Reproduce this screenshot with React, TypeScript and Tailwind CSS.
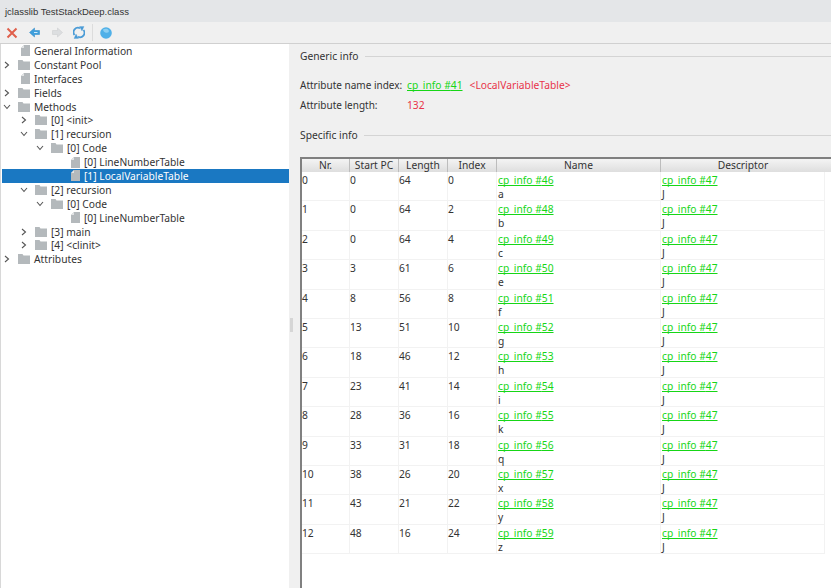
const font = "font-['Noto_Sans',sans-serif]";

type Node = { label: string; depth: number; arrow?: "right" | "down"; kind: "file" | "folder"; selected?: boolean };

const tree: Node[] = [
  { label: "General Information", depth: 0, kind: "file" },
  { label: "Constant Pool", depth: 0, arrow: "right", kind: "folder" },
  { label: "Interfaces", depth: 0, kind: "file" },
  { label: "Fields", depth: 0, arrow: "right", kind: "folder" },
  { label: "Methods", depth: 0, arrow: "down", kind: "folder" },
  { label: "[0] <init>", depth: 1, arrow: "right", kind: "folder" },
  { label: "[1] recursion", depth: 1, arrow: "down", kind: "folder" },
  { label: "[0] Code", depth: 2, arrow: "down", kind: "folder" },
  { label: "[0] LineNumberTable", depth: 3, kind: "file" },
  { label: "[1] LocalVariableTable", depth: 3, kind: "file", selected: true },
  { label: "[2] recursion", depth: 1, arrow: "down", kind: "folder" },
  { label: "[0] Code", depth: 2, arrow: "down", kind: "folder" },
  { label: "[0] LineNumberTable", depth: 3, kind: "file" },
  { label: "[3] main", depth: 1, arrow: "right", kind: "folder" },
  { label: "[4] <clinit>", depth: 1, arrow: "right", kind: "folder" },
  { label: "Attributes", depth: 0, arrow: "right", kind: "folder" },
];

const rows = [
  [0, 0, 64, 0, 46, "a"],
  [1, 0, 64, 2, 48, "b"],
  [2, 0, 64, 4, 49, "c"],
  [3, 3, 61, 6, 50, "e"],
  [4, 8, 56, 8, 51, "f"],
  [5, 13, 51, 10, 52, "g"],
  [6, 18, 46, 12, 53, "h"],
  [7, 23, 41, 14, 54, "i"],
  [8, 28, 36, 16, 55, "k"],
  [9, 33, 31, 18, 56, "q"],
  [10, 38, 26, 20, 57, "x"],
  [11, 43, 21, 22, 58, "y"],
  [12, 48, 16, 24, 59, "z"],
];

const columns = "grid w-[523px] grid-cols-[48px_49px_49px_49px_164px_164px]";

function FolderIcon() {
  return (
    <svg width="12" height="10" viewBox="0 0 12 10" className="shrink-0">
      <path d="M0 0h4.5l1 1.5H12V10H0z" fill="#b4b9bc" />
    </svg>
  );
}

function FileIcon() {
  return (
    <svg width="9" height="11" viewBox="0 0 9 11" className="shrink-0">
      <path d="M3 0h6v11H0V3z" fill="#b4b9bc" />
      <path d="M0 3h3V0z" fill="#e2e4e5" />
    </svg>
  );
}

function Chevron({ dir }: { dir: "right" | "down" }) {
  return (
    <svg width="8" height="8" viewBox="0 0 8 8" className="shrink-0" fill="none" stroke="#555" strokeWidth="1.1">
      {dir === "right" ? <path d="M2 1l3.5 3L2 7" /> : <path d="M1 2l3 3.5L7 2" />}
    </svg>
  );
}

function TreeRow({ node }: { node: Node }) {
  return (
    <div className={`flex h-[13.9px] items-center ${node.selected ? "bg-[#1a78c2] text-white" : "text-[#333]"}`}>
      <div
        className={`flex items-center ${
          node.depth === 0 ? "pl-[1px]" : node.depth === 1 ? "pl-[18px]" : node.depth === 2 ? "pl-[34px]" : "pl-[51px]"
        }`}
      >
        <div className="w-[14px]">{node.arrow && <Chevron dir={node.arrow} />}</div>
        <div className="flex w-[16px] justify-end pr-[3px]">
          {node.kind === "folder" ? <FolderIcon /> : <FileIcon />}
        </div>
      </div>
      <span className="ml-px whitespace-pre">{node.label}</span>
    </div>
  );
}

function SectionTitle({ title }: { title: string }) {
  return (
    <div className="flex items-center gap-[6px] text-[#333]">
      <span>{title}</span>
      <div className="h-px flex-1 bg-[#d4d4d4]" />
    </div>
  );
}

function CpLink({ n }: { n: number | string }) {
  return <span className="text-[#16d616] underline [text-decoration-skip-ink:none]">cp_info #{n}</span>;
}

export default function App() {
  return (
    <div className={`flex h-[588px] w-[831px] flex-col overflow-hidden bg-[#f0f0f0] text-[10.25px] leading-[14px] ${font}`}>
      <div className="flex h-[22px] items-center bg-[#e4e6e8] pl-[5px] pt-[2px] font-['Liberation_Sans',sans-serif] text-[9.5px] text-[#333]">
        jclasslib TestStackDeep.class
      </div>

      <div className="flex h-[22px] items-center border-b border-[#d0d0d0] pl-[6px]">
        <svg width="12" height="12" viewBox="0 0 12 12">
          <path d="M1.5 1.5l9 9M10.5 1.5l-9 9" stroke="#e0604c" strokeWidth="2" />
        </svg>
        <svg width="11" height="11" viewBox="0 0 11 11" className="ml-[11px]">
          <path d="M0.5 5.5L5.5 1v2.5h5v4h-5V10z" fill="#3f9fdc" stroke="#2b84c4" strokeWidth="0.5" />
          <path d="M5 5h3.5v1H5z" fill="#cfeafa" />
        </svg>
        <svg width="11" height="11" viewBox="0 0 11 11" className="ml-[12px]">
          <path d="M10.5 5.5L5.5 1v2.5h-5v4h5V10z" fill="#dcdee0" stroke="#c8cacc" strokeWidth="0.5" />
        </svg>
        <svg width="12" height="13" viewBox="0 0 12 13" className="ml-[10px]" fill="none" stroke="#4a9bd6" strokeWidth="1.8">
          <path d="M1.5 9A4.5 4.5 0 0 1 7 2.2" />
          <path d="M10.5 4A4.5 4.5 0 0 1 5 10.8" />
          <path d="M6.5 0.5L11 0.5 9 5zM5.500 12.500L1 12.500 3 8z" fill="#4a9bd6" strokeWidth="0.3" />
        </svg>
        <div className="ml-[7px] h-[17px] w-px bg-[#dcdcdc]" />
        <svg width="12" height="12" viewBox="0 0 12 12" className="ml-[7px]">
          <circle cx="6" cy="6" r="5.8" fill="#4fb0e8" />
          <path d="M3 2.5c2-1 4.5-1 5.5.5s0 3-2 2.8S3.2 4.500 3 2.500z" fill="#8ccff2" />
        </svg>
      </div>

      <div className="flex min-h-0 flex-1">
        <div className="w-[289px] border-l border-[#d8d8d8] bg-white pl-px">
          {tree.map((node, i) => (
            <TreeRow key={i} node={node} />
          ))}
        </div>

        <div className="flex w-[11px] items-center pl-px">
          <div className="mt-[18px] h-[14px] w-[3px] bg-[#d6d6d6]" />
        </div>

        <div className="flex min-w-0 flex-1 flex-col">
          <div className="pt-[5px]">
            <SectionTitle title="Generic info" />
          </div>
          <div className="mt-[15px] flex h-[14px] whitespace-nowrap">
            <span className="w-[107px] text-[10px] text-[#333]">Attribute name index:</span>
            <CpLink n={41} />
            <span className="ml-[7px] text-[#e8344a]">{"<LocalVariableTable>"}</span>
          </div>
          <div className="mt-[6px] flex h-[14px] whitespace-nowrap">
            <span className="w-[107px] text-[10px] text-[#333]">Attribute length:</span>
            <span className="text-[#e8344a]">132</span>
          </div>
          <div className="mt-[16px]">
            <SectionTitle title="Specific info" />
          </div>

          <div className="mt-[15px] flex-1 border-t-2 border-l-2 border-[#808080] bg-white">
            <div className="h-[13px] bg-gradient-to-b from-[#f4f4f4] to-[#dedede] text-[#333]">
              <div className={columns}>
                {["Nr.", "Start PC", "Length", "Index", "Name", "Descriptor"].map((h) => (
                  <div key={h} className="h-[13px] border-r border-[#bdbdbd] text-center leading-[13px] last:border-r-0">
                    {h}
                  </div>
                ))}
              </div>
            </div>
            {rows.map((row) => (
              <div key={row[0]} className={`${columns} h-[29.4px] border-b border-[#f2f2f2] text-[#333]`}>
                {row.slice(0, 4).map((value, i) => (
                  <div key={i} className="border-r border-[#f2f2f2] pt-px">
                    {value}
                  </div>
                ))}
                <div className="border-r border-[#f2f2f2] pl-px pt-px">
                  <CpLink n={row[4]} />
                  <div>{row[5]}</div>
                </div>
                <div className="border-r border-[#f2f2f2] pl-px pt-px">
                  <CpLink n={47} />
                  <div>J</div>
                </div>
              </div>
            ))}
          </div>
        </div>
      </div>
    </div>
  );
}
